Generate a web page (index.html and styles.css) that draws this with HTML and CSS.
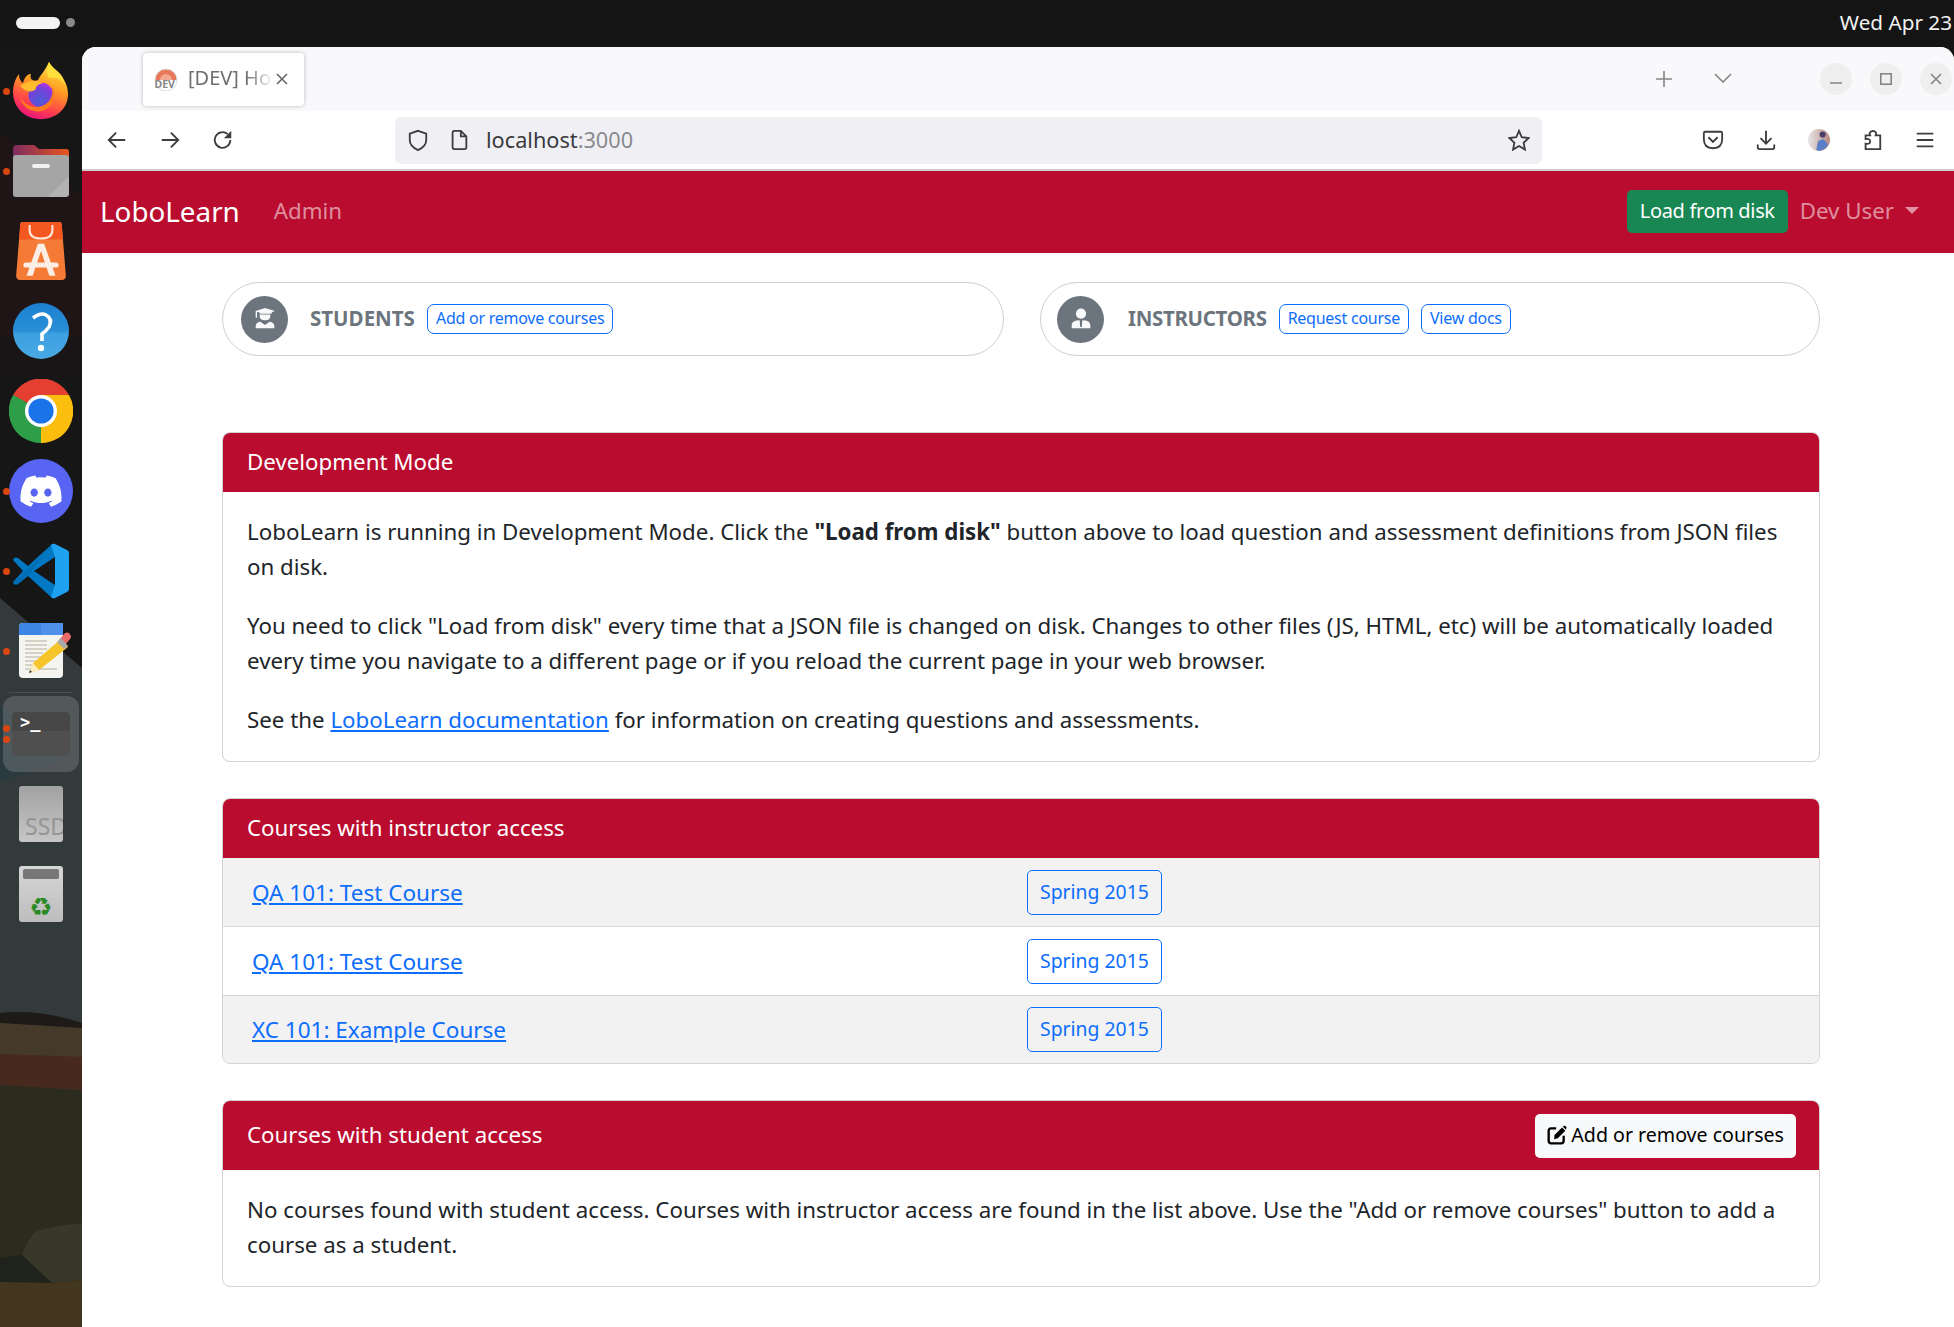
FILE: index.html
```html
<!DOCTYPE html>
<html lang="en">
<head>
  <meta charset="UTF-8">
  <meta name="viewport" content="width=device-width, initial-scale=1.0">
  <title>[DEV] Home</title>
  <link rel="stylesheet" href="styles.css">
</head>
<body>
  <div class="topbar">
    <div class="workspaces"><span class="ws-active"></span><span class="ws-dot"></span></div>
    <div class="clock">Wed Apr 23</div>
  </div>
  <div class="desktop">
    <aside class="dock">
      <svg class="wallpaper" viewBox="0 0 82 1280" preserveAspectRatio="none">
        <rect width="82" height="1280" fill="#161616"/>
        <polygon points="0,85 82,150 82,290 0,290" fill="#1f1516"/>
        <polygon points="0,290 82,290 82,330 0,330" fill="#191516"/>
        <polygon points="0,551 82,621 82,1000 0,1000" fill="#333a3b"/>
        <polygon points="0,658 60,713 0,735" fill="#2b3a3f"/>
        <path d="M0 966 Q40 962 82 976 V1290 H0Z" fill="#1e1a18"/>
        <path d="M0 976 L82 981 V1290 H0Z" fill="#453a2a"/>
        <path d="M0 1007 L82 1010 V1043 L0 1038Z" fill="#47291d"/>
        <path d="M0 1038 L82 1043 V1290 H0Z" fill="#2b2b1e"/>
        <path d="M22 1208 Q30 1186 40 1183 Q60 1178 82 1176 V1233 L52 1236Z" fill="#37372a"/>
        <path d="M0 1211 L22 1208 L52 1236 L0 1235Z" fill="#20231b"/>
        <path d="M0 1235 L52 1236 L82 1233 V1290 H0Z" fill="#43361f"/>
      </svg>

      <div class="dock-item has-dot">
        <svg class="icon-56" viewBox="0 0 56 58">
          <defs>
            <linearGradient id="ffOuter" x1="0.7" y1="0" x2="0.3" y2="1"><stop offset="0" stop-color="#ffe847"/><stop offset="0.4" stop-color="#ff9a22"/><stop offset="0.75" stop-color="#ff3f4d"/><stop offset="1" stop-color="#e6127f"/></linearGradient>
            <radialGradient id="ffGlobe" cx="0.45" cy="0.7" r="0.7"><stop offset="0" stop-color="#4d5bd8"/><stop offset="0.7" stop-color="#7a3fd8"/><stop offset="1" stop-color="#b833e1"/></radialGradient>
          </defs>
          <path d="M36 0 C38 6 48 9 51 18 C57 28 56 40 50 47 C43 56 30 59 19 56 C7 52 0 42 0 30 C0 24 2 17 6 12 C6 17 8 20 10 21 C12 14 15 12 18 12 C16 17 20 20 25 18 C28 12 32 9 36 0Z" fill="url(#ffOuter)"/>
          <path d="M36 0 C40 8 50 12 53 24 C50 18 44 14 36 16 C33 11 34 6 36 0Z" fill="#ffe03d"/>
          <circle cx="28" cy="33" r="12.5" fill="url(#ffGlobe)"/>
          <path d="M7 24 C13 19 23 18 30 21 C25 22 22 25 23 27 C19 31 12 30 7 24Z" fill="#ffbd2e"/>
          <path d="M39 25 C44 33 41 46 29 49 C18 51 9 45 7 35 C12 43 20 47 29 44 C37 41 41 33 39 25Z" fill="#ff7a1f"/>
        </svg>
      </div>
      <div class="dock-item has-dot">
        <svg class="icon-56" viewBox="0 0 56 52">
          <defs><linearGradient id="fdBack" x1="0" x2="1"><stop offset="0" stop-color="#7c2c60"/><stop offset="1" stop-color="#e8541f"/></linearGradient></defs>
          <path d="M0 4 Q0 0 4 0 H21 L26 4 H53 Q56 4 56 7 V20 H0Z" fill="url(#fdBack)"/>
          <rect y="10" width="56" height="42" rx="3" fill="#a5a5a5"/>
          <polygon points="56,31 56,49 53,52 35,52" fill="#b2b2b2"/>
          <rect x="19" y="19" width="18" height="4" rx="2" fill="#f2f2f2"/>
        </svg>
      </div>
      <div class="dock-item">
        <svg class="icon-56" viewBox="0 0 48 56">
          <path d="M4 2 Q4 0 7 0 H41 Q44 0 44 2 L48 52 Q48 56 44 56 H4 Q0 56 0 52Z" fill="#f47a36"/>
          <path d="M4 2 Q4 0 7 0 H41 Q44 0 44 2 L45 17 H3Z" fill="#f4571f"/>
          <path d="M13 3 V8 Q13 16 24 16 Q35 16 35 8 V3" fill="none" stroke="#fde6d8" stroke-width="2"/>
          <path d="M21 21 H27 L38 52 H32 L24 28 L16 52 H10Z" fill="#fdeee5"/>
          <rect x="7" y="39" width="34" height="5" rx="2.5" fill="#fdeee5"/>
        </svg>
      </div>
      <div class="dock-item">
        <svg class="icon-56" viewBox="0 0 56 56">
          <defs><linearGradient id="hlpBg" x1="0" x2="0" y1="0" y2="1"><stop offset="0" stop-color="#1c80cf"/><stop offset="0.5" stop-color="#2a8fd8"/><stop offset="0.55" stop-color="#3da0e0"/><stop offset="1" stop-color="#48a9e4"/></linearGradient></defs>
          <circle cx="28" cy="28" r="28" fill="url(#hlpBg)"/>
          <path d="M20 15 Q28 9 33 12 Q40 16 36 24 Q33 28 29 31 V38" fill="none" stroke="#fff" stroke-width="3.6"/>
          <circle cx="28" cy="45" r="3.2" fill="#fff"/>
        </svg>
      </div>
      <div class="dock-item">
        <svg class="icon-64" viewBox="0 0 64 64">
          <path d="M32 32 L4 16 A32 32 0 0 1 60 16 Z" fill="#e53f31"/>
          <path d="M32 32 L60 16 A32 32 0 0 1 32 64 Z" fill="#fbbe0e"/>
          <path d="M32 32 L32 64 A32 32 0 0 1 4 16 Z" fill="#2f9e49"/>
          <path d="M4 16 L18 40 L32 32Z" fill="#2f9e49"/>
          <path d="M60 16 H32 L44 38Z" fill="#fbbe0e"/>
          <path d="M32 64 L46 40 L32 32Z" fill="#fbbe0e"/>
          <circle cx="32" cy="32" r="16" fill="#fff"/>
          <circle cx="32" cy="32" r="12.6" fill="#1a73e8"/>
        </svg>
      </div>
      <div class="dock-item has-dot">
        <svg class="icon-64" viewBox="0 0 64 64">
          <circle cx="32" cy="32" r="32" fill="#5865f2"/>
          <g transform="translate(11.5 11.5) scale(1.71)"><path fill="#fff" d="M20.317 4.37a19.791 19.791 0 0 0-4.885-1.515.074.074 0 0 0-.079.037c-.21.375-.444.864-.608 1.25a18.27 18.27 0 0 0-5.487 0 12.64 12.64 0 0 0-.617-1.25.077.077 0 0 0-.079-.037A19.736 19.736 0 0 0 3.677 4.37a.07.07 0 0 0-.032.027C.533 9.046-.32 13.58.099 18.057a.082.082 0 0 0 .031.057 19.9 19.9 0 0 0 5.993 3.03.078.078 0 0 0 .084-.028 14.09 14.09 0 0 0 1.226-1.994.076.076 0 0 0-.041-.106 13.107 13.107 0 0 1-1.872-.892.077.077 0 0 1-.008-.128 10.2 10.2 0 0 0 .372-.292.074.074 0 0 1 .077-.01c3.928 1.793 8.18 1.793 12.062 0a.074.074 0 0 1 .078.01c.12.098.246.198.373.292a.077.077 0 0 1-.006.127 12.299 12.299 0 0 1-1.873.892.077.077 0 0 0-.041.107c.36.698.772 1.362 1.225 1.993a.076.076 0 0 0 .084.028 19.839 19.839 0 0 0 6.002-3.03.077.077 0 0 0 .032-.054c.5-5.177-.838-9.674-3.549-13.66a.061.061 0 0 0-.031-.03zM8.02 15.33c-1.183 0-2.157-1.085-2.157-2.419 0-1.333.956-2.419 2.157-2.419 1.21 0 2.176 1.096 2.157 2.42 0 1.333-.956 2.418-2.157 2.418zm7.975 0c-1.183 0-2.157-1.085-2.157-2.419 0-1.333.955-2.419 2.157-2.419 1.21 0 2.176 1.096 2.157 2.42 0 1.333-.946 2.418-2.157 2.418z"/></g>
        </svg>
      </div>
      <div class="dock-item has-dot">
        <svg class="icon-56" viewBox="0 0 56 56">
          <path d="M42 1 Q40 0 38 2 L15 23 L5 15 Q3 14 1 15 L0 17 L10 28 L0 39 L1 41 Q3 42 5 41 L15 33 L38 54 Q40 56 42 55 Z" fill="#0078c4"/>
          <path d="M42 1 L38 2 L15 33 L5 41 Q3 42 1 41 L0 39 Z" fill="#0066a8" opacity="0.55"/>
          <path d="M42 14 V42 L21 28Z" fill="#161616"/>
          <path d="M42 1 L54 7 Q56 8 56 10 V46 Q56 48 54 49 L42 55 Q40 56 38 54 L42 42 V14 L38 2 Q40 0 42 1Z" fill="#1fa1f1"/>
        </svg>
      </div>
      <div class="dock-item has-dot">
        <svg class="icon-editor" viewBox="0 0 52 56">
          <rect width="44" height="55" rx="4" fill="#f4f4f1"/>
          <path d="M0 12 V4 Q0 0 4 0 H40 Q44 0 44 4 V12Z" fill="#3e86e4"/>
          <rect x="22" width="22" height="12" fill="#4f91e8"/>
          <path d="M6 18 H28 M6 22 H28 M6 26 H28 M6 30 H24 M6 34 H22 M6 38 H18 M6 42 H14 M6 46 H38" stroke="#c9c6b6" stroke-width="1.6"/>
          <path d="M10 50 L14 40 L42 16 L49 24 L20 47Z" fill="#f6c52b"/>
          <path d="M10 50 L14 40 L20 47Z" fill="#fdebc0"/>
          <path d="M40 17 L46 10 Q48 9 50 10 L52 13 Q52 15 51 16 L46 22Z" fill="#ea6a6a"/>
          <path d="M38 19 L42 15 L49 23 L45 26Z" fill="#aaa"/>
          <path d="M10 50 L11 47 L13 49Z" fill="#333"/>
        </svg>
      </div>
      <div class="dock-sep"></div>
      <div class="dock-item dock-active has-dots">
        <svg class="icon-term" viewBox="0 0 58 44">
          <rect width="58" height="44" rx="5" fill="#4f4f4f"/>
          <path d="M0 19 V5 Q0 0 5 0 H53 Q58 0 58 5 V19Z" fill="#484747"/>
          <text class="term-text" x="8" y="16">&gt;_</text>
        </svg>
      </div>
      <div class="dock-item">
        <svg class="icon-drive" viewBox="0 0 44 56">
          <defs><linearGradient id="ssdBg" x1="0" x2="0" y1="0" y2="1"><stop offset="0" stop-color="#a2a2a2"/><stop offset="1" stop-color="#c6c6c6"/></linearGradient></defs>
          <rect width="44" height="56" rx="3" fill="url(#ssdBg)"/>
          <text class="ssd-text" x="6" y="49">SSD</text>
        </svg>
      </div>
      <div class="dock-item">
        <svg class="icon-drive" viewBox="0 0 44 56">
          <defs><linearGradient id="trBg" x1="0" x2="0" y1="0" y2="1"><stop offset="0" stop-color="#d6d6d6"/><stop offset="1" stop-color="#bdbdbd"/></linearGradient></defs>
          <rect width="44" height="56" rx="3" fill="url(#trBg)"/>
          <rect x="4" y="3" width="36" height="10" rx="2" fill="#777"/>
          <text class="recycle" x="22" y="50" text-anchor="middle">♻</text>
        </svg>
      </div>
    </aside>

    <div class="browser">
      <div class="tabstrip">
        <div class="tab">
          <svg class="favicon" viewBox="0 0 24 24">
            <path d="M1 13 A11 11 0 0 1 23 13Z" fill="#e8785a"/>
            <path d="M6 13 A6 6 0 0 1 18 13Z" fill="#f3a98f"/>
            <circle cx="12" cy="13" r="11" fill="none" stroke="#ddd" stroke-width="1"/>
            <text class="favicon-text" x="0.5" y="21">DEV</text>
          </svg>
          <span class="tab-title">[DEV] Home</span>
          <svg class="tab-close" viewBox="0 0 12 12"><path d="M1 1 L11 11 M11 1 L1 11"/></svg>
        </div>
        <svg class="strip-icon strip-plus" viewBox="0 0 18 18"><path d="M9 1 V17 M1 9 H17"/></svg>
        <svg class="strip-icon strip-chevron" viewBox="0 0 18 10"><path d="M1 1 L9 9 L17 1"/></svg>
        <div class="win-btn"><svg viewBox="0 0 12 12"><path d="M0 10 H12"/></svg></div>
        <div class="win-btn"><svg viewBox="0 0 12 12"><rect x="0.8" y="0.8" width="10.4" height="10.4"/></svg></div>
        <div class="win-btn"><svg viewBox="0 0 12 12"><path d="M1 1 L11 11 M11 1 L1 11"/></svg></div>
      </div>

      <div class="toolbar">
        <svg class="tool" viewBox="0 0 24 24"><path d="M21 12 H3 M11 4 L3 12 L11 20"/></svg>
        <svg class="tool" viewBox="0 0 24 24"><path d="M3 12 H21 M13 4 L21 12 L13 20"/></svg>
        <svg class="tool" viewBox="0 0 24 24"><path d="M20 12 A8.5 8.5 0 1 1 17 5.5"/><path class="solid" d="M21 2 V10 H13Z"/></svg>
        <div class="urlbar">
          <svg class="tool" viewBox="0 0 24 24"><path d="M12 2 L21 5 V12 Q21 19 12 23 Q3 19 3 12 V5Z"/></svg>
          <svg class="tool tool-page" viewBox="0 0 24 24"><path d="M5 4 Q5 2 7 2 H14 L20 8 V20 Q20 22 18 22 H7 Q5 22 5 20Z M14 2 V8 H20"/></svg>
          <span class="url"><span class="url-host">localhost</span>:3000</span>
          <svg class="tool tool-star" viewBox="0 0 24 24"><path d="M12 2 L15 9 L22.5 9.8 L17 15 L18.5 22.5 L12 18.6 L5.5 22.5 L7 15 L1.5 9.8 L9 9Z"/></svg>
        </div>
        <div class="toolbar-right">
          <svg class="tool" viewBox="0 0 24 24"><path d="M3 3 H21 Q22 3 22 5 V11 Q22 21 12 21 Q2 21 2 11 V5 Q2 3 3 3Z M7 9 L12 14 L17 9"/></svg>
          <svg class="tool" viewBox="0 0 24 24"><path d="M12 2 V16 M6 10 L12 16 L18 10 M3 17 V20 Q3 22 5 22 H19 Q21 22 21 20 V17"/></svg>
          <svg class="tool tool-avatar" viewBox="0 0 24 24">
            <defs><linearGradient id="avBg" x1="0" x2="1"><stop offset="0" stop-color="#e8e8ea"/><stop offset="1" stop-color="#b98a80"/></linearGradient></defs>
            <circle class="solid-av" cx="12" cy="12" r="12" fill="url(#avBg)"/>
            <path class="solid-blue" d="M9 23 L11 13 L17 11 L22 17 Q19 23 12 24Z"/>
            <circle class="solid-dark" cx="16" cy="6" r="3.4"/>
          </svg>
          <svg class="tool" viewBox="0 0 24 24"><path d="M13 2 Q18 3 16 7 H21 V22 H5 V16 Q10 17 10 13.5 Q10 10 5 11 V7 H10 Q8 3 13 2Z"/></svg>
          <svg class="tool" viewBox="0 0 24 24"><path d="M3 5 H21 M3 12 H21 M3 19 H21"/></svg>
        </div>
      </div>

      <nav class="navbar">
        <a class="brand">LoboLearn</a>
        <a class="nav-link">Admin</a>
        <a class="btn-load">Load from disk</a>
        <a class="nav-link nav-user">Dev User<span class="caret"></span></a>
      </nav>

      <main class="content">
        <div class="pills">
          <div class="pill">
            <span class="avatar">
              <svg viewBox="0 0 24 24"><path d="M5 6 L12 3.8 L19.5 6 L17 7 V8 H8 V7.2 L6 6.6 V11 H5Z"/><path d="M8 8.6 H16 Q16.5 13 12 13 Q7.5 13 8 8.6Z"/><path d="M5 19 V17.5 Q5 14.5 8.5 14 L12 16.5 L15.5 14 Q19 14.5 19 17.5 V19Z"/></svg>
            </span>
            <span class="pill-label">STUDENTS</span>
            <a class="btn-sm">Add or remove courses</a>
          </div>
          <div class="pill">
            <span class="avatar">
              <svg viewBox="0 0 24 24"><circle cx="12" cy="8" r="3.8"/><path d="M5 19 V17 Q5 14 8.5 13.2 L11 13 L11.4 18 H12.6 L13 13 L15.5 13.2 Q19 14 19 17 V19Z"/></svg>
            </span>
            <span class="pill-label">INSTRUCTORS</span>
            <a class="btn-sm">Request course</a>
            <a class="btn-sm">View docs</a>
          </div>
        </div>

        <section class="card">
          <div class="card-header">Development Mode</div>
          <div class="card-body">
            <p>LoboLearn is running in Development Mode. Click the <strong>"Load from disk"</strong> button above to load question and assessment definitions from JSON files on disk.</p>
            <p>You need to click "Load from disk" every time that a JSON file is changed on disk. Changes to other files (JS, HTML, etc) will be automatically loaded every time you navigate to a different page or if you reload the current page in your web browser.</p>
            <p>See the <a class="link">LoboLearn documentation</a> for information on creating questions and assessments.</p>
          </div>
        </section>

        <section class="card">
          <div class="card-header">Courses with instructor access</div>
          <div class="course-row striped"><div class="course-name"><a class="link">QA 101: Test Course</a></div><a class="btn-term">Spring 2015</a></div>
          <div class="course-row"><div class="course-name"><a class="link">QA 101: Test Course</a></div><a class="btn-term">Spring 2015</a></div>
          <div class="course-row striped"><div class="course-name"><a class="link">XC 101: Example Course</a></div><a class="btn-term">Spring 2015</a></div>
        </section>

        <section class="card">
          <div class="card-header header-action">
            <span>Courses with student access</span>
            <a class="btn-light">
              <svg viewBox="0 0 24 24"><path d="M11 4 H5 Q2 4 2 7 V19 Q2 22 5 22 H17 Q20 22 20 19 V13" fill="none" stroke="#000" stroke-width="2.8"/><path d="M9 12 L18 3 L22 7 L13 16 L8.5 17Z"/><path d="M19 2 L20.5 1 Q21.5 .5 22.5 1.5 L23 2 Q24 3 23 4.5 L22.5 5.5Z"/></svg>
              Add or remove courses
            </a>
          </div>
          <div class="card-body">
            <p>No courses found with student access. Courses with instructor access are found in the list above. Use the "Add or remove courses" button to add a course as a student.</p>
          </div>
        </section>
      </main>
    </div>
  </div>
</body>
</html>
```

FILE: styles.css
```css
* {
  box-sizing: border-box;
}

html, body {
  height: 100%;
}

body {
  margin: 0;
  overflow: hidden;
  font-family: "Noto Sans", Arial, sans-serif;
  font-size: 22.3px;
  color: #212529;
  background: #141414;
}

/* desktop shell */
.topbar {
  height: 47px;
  background: #141414;
  display: flex;
  align-items: center;
  justify-content: space-between;
  overflow: hidden;
  padding-bottom: 2px;
}

.workspaces {
  display: flex;
  align-items: center;
  gap: 6px;
  padding-left: 16px;
}

.ws-active {
  width: 44px;
  height: 12px;
  border-radius: 6px;
  background: #f4f4f4;
}

.ws-dot {
  width: 9px;
  height: 9px;
  border-radius: 50%;
  background: #8a8a8a;
}

.clock {
  color: #f2f2f2;
  font-size: 20.7px;
  white-space: nowrap;
  padding: 0 2px 2px 0;
}

.desktop {
  display: flex;
  height: 1280px;
}

.dock {
  position: relative;
  width: 82px;
  flex: none;
  padding-top: 4px;
  display: flex;
  flex-direction: column;
  align-items: center;
}

.wallpaper {
  position: absolute;
  left: 0;
  top: 0;
  width: 82px;
  height: 1280px;
}

.dock-item {
  position: relative;
  width: 76px;
  height: 80px;
  display: flex;
  align-items: center;
  justify-content: center;
  flex: none;
}

.has-dot::before {
  content: "";
  position: absolute;
  left: -0.5px;
  top: 36.5px;
  width: 7px;
  height: 7px;
  border-radius: 50%;
  background: #d9460f;
}

.has-dots::before,
.has-dots::after {
  content: "";
  position: absolute;
  left: -0.5px;
  width: 7px;
  height: 7px;
  border-radius: 50%;
  background: #d9460f;
}

.has-dots::before {
  top: 29px;
}

.has-dots::after {
  top: 40px;
}

.dock-sep {
  width: 64px;
  height: 1px;
  margin-top: 1px;
  background: rgba(255, 255, 255, 0.12);
  position: relative;
  flex: none;
}

.dock-active {
  height: 76px;
  margin: 3px 0 2px;
  border-radius: 12px;
  background: rgba(255, 255, 255, 0.16);
}

.icon-56 {
  width: 56px;
  height: 58px;
  position: relative;
}

.icon-64 {
  width: 64px;
  height: 64px;
}

.icon-editor {
  width: 52px;
  height: 56px;
  position: relative;
  left: 4px;
}

.icon-term {
  width: 58px;
  height: 44px;
}

.icon-drive {
  width: 44px;
  height: 56px;
}

.term-text {
  fill: #fff;
  font-family: "DejaVu Sans Mono", monospace;
  font-weight: 700;
  font-size: 17px;
}

.ssd-text {
  fill: #959595;
  font-family: "Noto Sans", sans-serif;
  font-size: 23px;
}

.recycle {
  fill: #2a8a24;
  font-family: "DejaVu Sans", sans-serif;
  font-size: 26px;
}

/* browser chrome */
.browser {
  flex: 1;
  min-width: 0;
  background: #fff;
  border-radius: 14px 14px 0 0;
  overflow: hidden;
}

.tabstrip {
  height: 64px;
  background: #f9f9fb;
  display: flex;
  align-items: center;
  padding: 0 2px 0 61px;
}

.tab {
  width: 161px;
  height: 53px;
  background: #fff;
  border-radius: 4px;
  box-shadow: 0 0 4px rgba(0, 0, 0, 0.25);
  display: flex;
  align-items: center;
  position: relative;
  padding-left: 11px;
  margin-right: auto;
}

.favicon {
  width: 24px;
  height: 24px;
  flex: none;
}

.favicon-text {
  fill: #888;
  font-family: "Noto Sans", sans-serif;
  font-weight: 700;
  font-size: 10.5px;
}

.tab-title {
  margin-left: 10px;
  width: 86px;
  padding-bottom: 4px;
  font-size: 20px;
  color: #6f6f73;
  white-space: nowrap;
  overflow: hidden;
  -webkit-mask-image: linear-gradient(to right, #000 68%, transparent 100%);
  mask-image: linear-gradient(to right, #000 68%, transparent 100%);
}

.tab-close {
  width: 12px;
  height: 12px;
  margin-left: 2px;
  fill: none;
  stroke: #666;
  stroke-width: 1.6;
}

.strip-icon {
  fill: none;
  stroke: #858585;
  stroke-width: 1.6;
}

.strip-plus {
  width: 18px;
  height: 18px;
  margin-right: 41px;
}

.strip-chevron {
  width: 18px;
  height: 10px;
  margin-right: 70px;
  margin-top: -3px;
}

.win-btn {
  width: 32px;
  height: 32px;
  margin-left: 18px;
  border-radius: 50%;
  background: #efefef;
  display: flex;
  align-items: center;
  justify-content: center;
}

.win-btn:first-of-type {
  margin-left: 0;
}

.win-btn svg {
  width: 12px;
  height: 12px;
  fill: none;
  stroke: #858585;
  stroke-width: 1.6;
}

.toolbar {
  height: 60px;
  background: #fff;
  border-bottom: 2px solid #cdcdcd;
  display: flex;
  align-items: center;
  padding: 0 18px 0 24px;
}

.tool {
  width: 22px;
  height: 22px;
  flex: none;
  fill: none;
  stroke: #3d3d3d;
  stroke-width: 2;
}

.toolbar > .tool {
  margin-right: 31px;
}

.toolbar > .tool:nth-child(3) {
  margin-right: 0;
}

.solid {
  fill: #3d3d3d;
  stroke: none;
}

.urlbar {
  width: 1147px;
  height: 47px;
  margin-left: 161px;
  background: #f0f0f4;
  border-radius: 6px;
  display: flex;
  align-items: center;
  padding: 0 12px;
}

.tool-page {
  margin-left: 19px;
}

.url {
  margin-left: 16px;
  padding-bottom: 2px;
  font-size: 21.7px;
  color: #8a8a8f;
  flex: 1;
}

.url-host {
  color: #3a3a3d;
}

.toolbar-right {
  display: flex;
  align-items: center;
  gap: 31px;
  margin-left: auto;
}

.tool-avatar {
  stroke: none;
}

.solid-av {
  stroke: none;
}

.solid-blue {
  fill: #5b7fc7;
}

.solid-dark {
  fill: #4a3f6b;
}

/* navbar */
.navbar {
  height: 82px;
  background: #ba0c2f;
  display: flex;
  align-items: center;
  padding: 0 35px 3px 18px;
}

.brand {
  color: #fff;
  font-size: 27.8px;
  margin-right: 34px;
}

.nav-link {
  color: rgba(255, 255, 255, 0.55);
  font-size: 22.3px;
}

.btn-load {
  margin: 2px 12px 0 auto;
  height: 43px;
  line-height: 42px;
  padding: 0 13px;
  background: #198754;
  color: #fff;
  border-radius: 5px;
  font-size: 20px;
  letter-spacing: -0.35px;
}

.nav-user {
  display: flex;
  align-items: center;
}

.caret {
  width: 0;
  height: 0;
  margin-left: 11px;
  border-top: 7px solid rgba(255, 255, 255, 0.55);
  border-left: 7px solid transparent;
  border-right: 7px solid transparent;
}

/* page content */
.content {
  padding: 29px 134px 0 140px;
}

.pills {
  display: flex;
  gap: 36px;
  margin-bottom: 76px;
}

.pill {
  flex: 1;
  height: 74px;
  border: 1px solid #d0d0d0;
  border-radius: 37px;
  display: flex;
  align-items: center;
  padding-left: 18px;
}

.pill + .pill {
  padding-left: 16px;
}

.avatar {
  width: 47px;
  height: 47px;
  border-radius: 50%;
  background: #6c757d;
  display: flex;
  align-items: center;
  justify-content: center;
  margin-right: 22px;
}

.pill + .pill .avatar {
  margin-right: 24px;
}

.avatar svg {
  width: 32px;
  height: 32px;
  fill: #f8f9fa;
}

.pill-label {
  font-size: 20.5px;
  font-weight: 700;
  color: #6c757d;
  margin-right: 12px;
  padding-bottom: 2px;
}

.pill + .pill .pill-label {
  letter-spacing: -0.33px;
}

.btn-sm {
  height: 30px;
  line-height: 26px;
  padding: 0 8px;
  border: 1px solid #0d6efd;
  border-radius: 7px;
  color: #0d6efd;
  font-size: 16px;
  letter-spacing: -0.25px;
  margin-right: 12px;
}

.card {
  border: 1px solid #d2d2d2;
  border-radius: 8px;
  overflow: hidden;
  margin-bottom: 36px;
}

.card-header {
  height: 59px;
  background: #ba0c2f;
  color: #fff;
  display: flex;
  align-items: center;
  padding: 0 23px 3px 24px;
}

.header-action {
  height: 69px;
  padding: 0 23px 2px 24px;
  justify-content: space-between;
}

.card-body {
  padding: 22px 23px 0 24px;
  line-height: 35px;
}

.card-body p {
  margin: 0 0 24px;
}

.link {
  color: #0d6efd;
  text-decoration: underline;
}

.course-row {
  height: 69px;
  display: flex;
  align-items: center;
  padding-left: 29px;
  border-top: 1px solid #d8d8d8;
}

.course-row:last-child {
  height: 68px;
}

.striped {
  background: #f2f2f2;
}

.course-row:nth-child(2) {
  height: 68px;
  border-top: none;
}

.course-name {
  width: 775px;
  font-size: 22.5px;
}

.btn-term {
  height: 45px;
  line-height: 42px;
  padding: 0 12px;
  border: 1px solid #0d6efd;
  border-radius: 5px;
  color: #0d6efd;
  font-size: 19.4px;
}

.btn-light {
  height: 44px;
  padding: 0 12px 2px;
  margin-top: 2px;
  background: #f8f9fa;
  color: #000;
  border-radius: 5px;
  font-size: 19.6px;
  display: flex;
  align-items: center;
  gap: 4px;
}

.btn-light svg {
  width: 20px;
  height: 20px;
}
```
